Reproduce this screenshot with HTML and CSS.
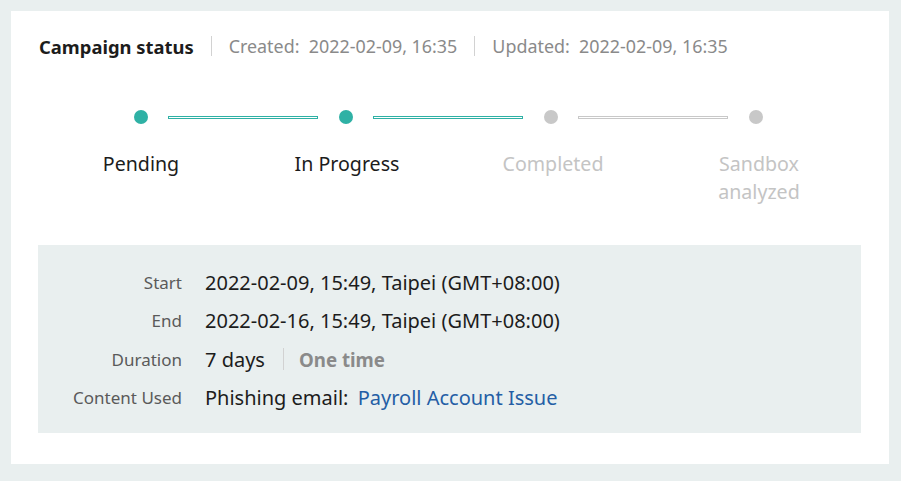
FILE: index.html
```html
<!DOCTYPE html>
<html lang="en">
<head>
<meta charset="utf-8">
<title>Campaign status</title>
<link rel="stylesheet" href="styles.css">
</head>
<body>
<div class="card">
  <div class="header">
    <span class="title">Campaign status</span>
    <span class="sep"></span>
    <span class="meta">Created:&nbsp; 2022-02-09, 16:35</span>
    <span class="sep"></span>
    <span class="meta">Updated:&nbsp; 2022-02-09, 16:35</span>
  </div>

  <div class="stepper">
    <div class="track">
      <span class="dot done"></span>
      <span class="line done"></span>
      <span class="dot done"></span>
      <span class="line done"></span>
      <span class="dot"></span>
      <span class="line"></span>
      <span class="dot"></span>
    </div>
    <div class="labels">
      <div class="label done">Pending</div>
      <div class="label done">In Progress</div>
      <div class="label">Completed</div>
      <div class="label">Sandbox<br>analyzed</div>
    </div>
  </div>

  <div class="info">
    <div class="row"><div class="key">Start</div><div class="val">2022-02-09, 15:49, Taipei (GMT+08:00)</div></div>
    <div class="row"><div class="key">End</div><div class="val">2022-02-16, 15:49, Taipei (GMT+08:00)</div></div>
    <div class="row"><div class="key">Duration</div><div class="val">7 days<span class="vsep"></span><span class="strong">One time</span></div></div>
    <div class="row"><div class="key">Content Used</div><div class="val">Phishing email:&nbsp; <a class="link" href="#">Payroll Account Issue</a></div></div>
  </div>
</div>
</body>
</html>
```

FILE: styles.css
```css
html, body {
  margin: 0;
  padding: 0;
}
body {
  background: #e9efef;
  font-family: "Noto Sans", "Open Sans", sans-serif;
  padding: 11px 12px 17px 11px;
}
.card {
  background: #ffffff;
  width: 878px;
  height: 453px;
  box-sizing: border-box;
  padding: 0 28px 0 27px;
}
.header {
  display: flex;
  align-items: center;
  height: 70px;
  padding-left: 1px;
}
.title {
  font-weight: 700;
  font-size: 18.4px;
  color: #1c1c1c;
}
.sep {
  width: 1px;
  height: 20px;
  background: #d2d2d2;
  margin: 0 17px 0 17px;
}
.meta {
  font-size: 17.9px;
  color: #8a8a8a;
}
.stepper {
  padding-top: 24px;
}
.track {
  display: flex;
  align-items: center;
  gap: 20px;
  padding-left: 96px;
  height: 24px;
}
.dot {
  width: 14px;
  height: 14px;
  border-radius: 50%;
  background: #c8c8c8;
  flex: none;
}
.dot.done {
  background: #2fb1a5;
}
.line {
  width: 150px;
  height: 3px;
  box-sizing: border-box;
  border: 1px solid #c8c8c8;
  flex: none;
  margin-right: 1px;
}
.line.done {
  border-color: #2fb1a5;
}
.labels {
  display: grid;
  grid-template-columns: repeat(4, 206px);
  margin-top: 21px;
}
.label {
  text-align: center;
  font-size: 19.6px;
  line-height: 28px;
  color: #c4c4c4;
}
.label.done {
  color: #1c1c1c;
}
.info {
  margin-top: 39px;
  background: #e9efef;
  padding: 18px 0 16px;
}
.row {
  display: flex;
  align-items: center;
  height: 38.5px;
}
.key {
  width: 144px;
  text-align: right;
  font-size: 17px;
  color: #5a5a5a;
  flex: none;
}
.val {
  margin-left: 23px;
  font-size: 20px;
  color: #1c1c1c;
  display: flex;
  align-items: center;
}
.vsep {
  width: 1px;
  height: 22px;
  background: #d2d2d2;
  margin: 0 15px 0 18px;
}
.strong {
  font-weight: 700;
  font-size: 18.7px;
  color: #8a8a8a;
}
.link {
  color: #245ea5;
  text-decoration: none;
  margin-left: 4px;
}
```
